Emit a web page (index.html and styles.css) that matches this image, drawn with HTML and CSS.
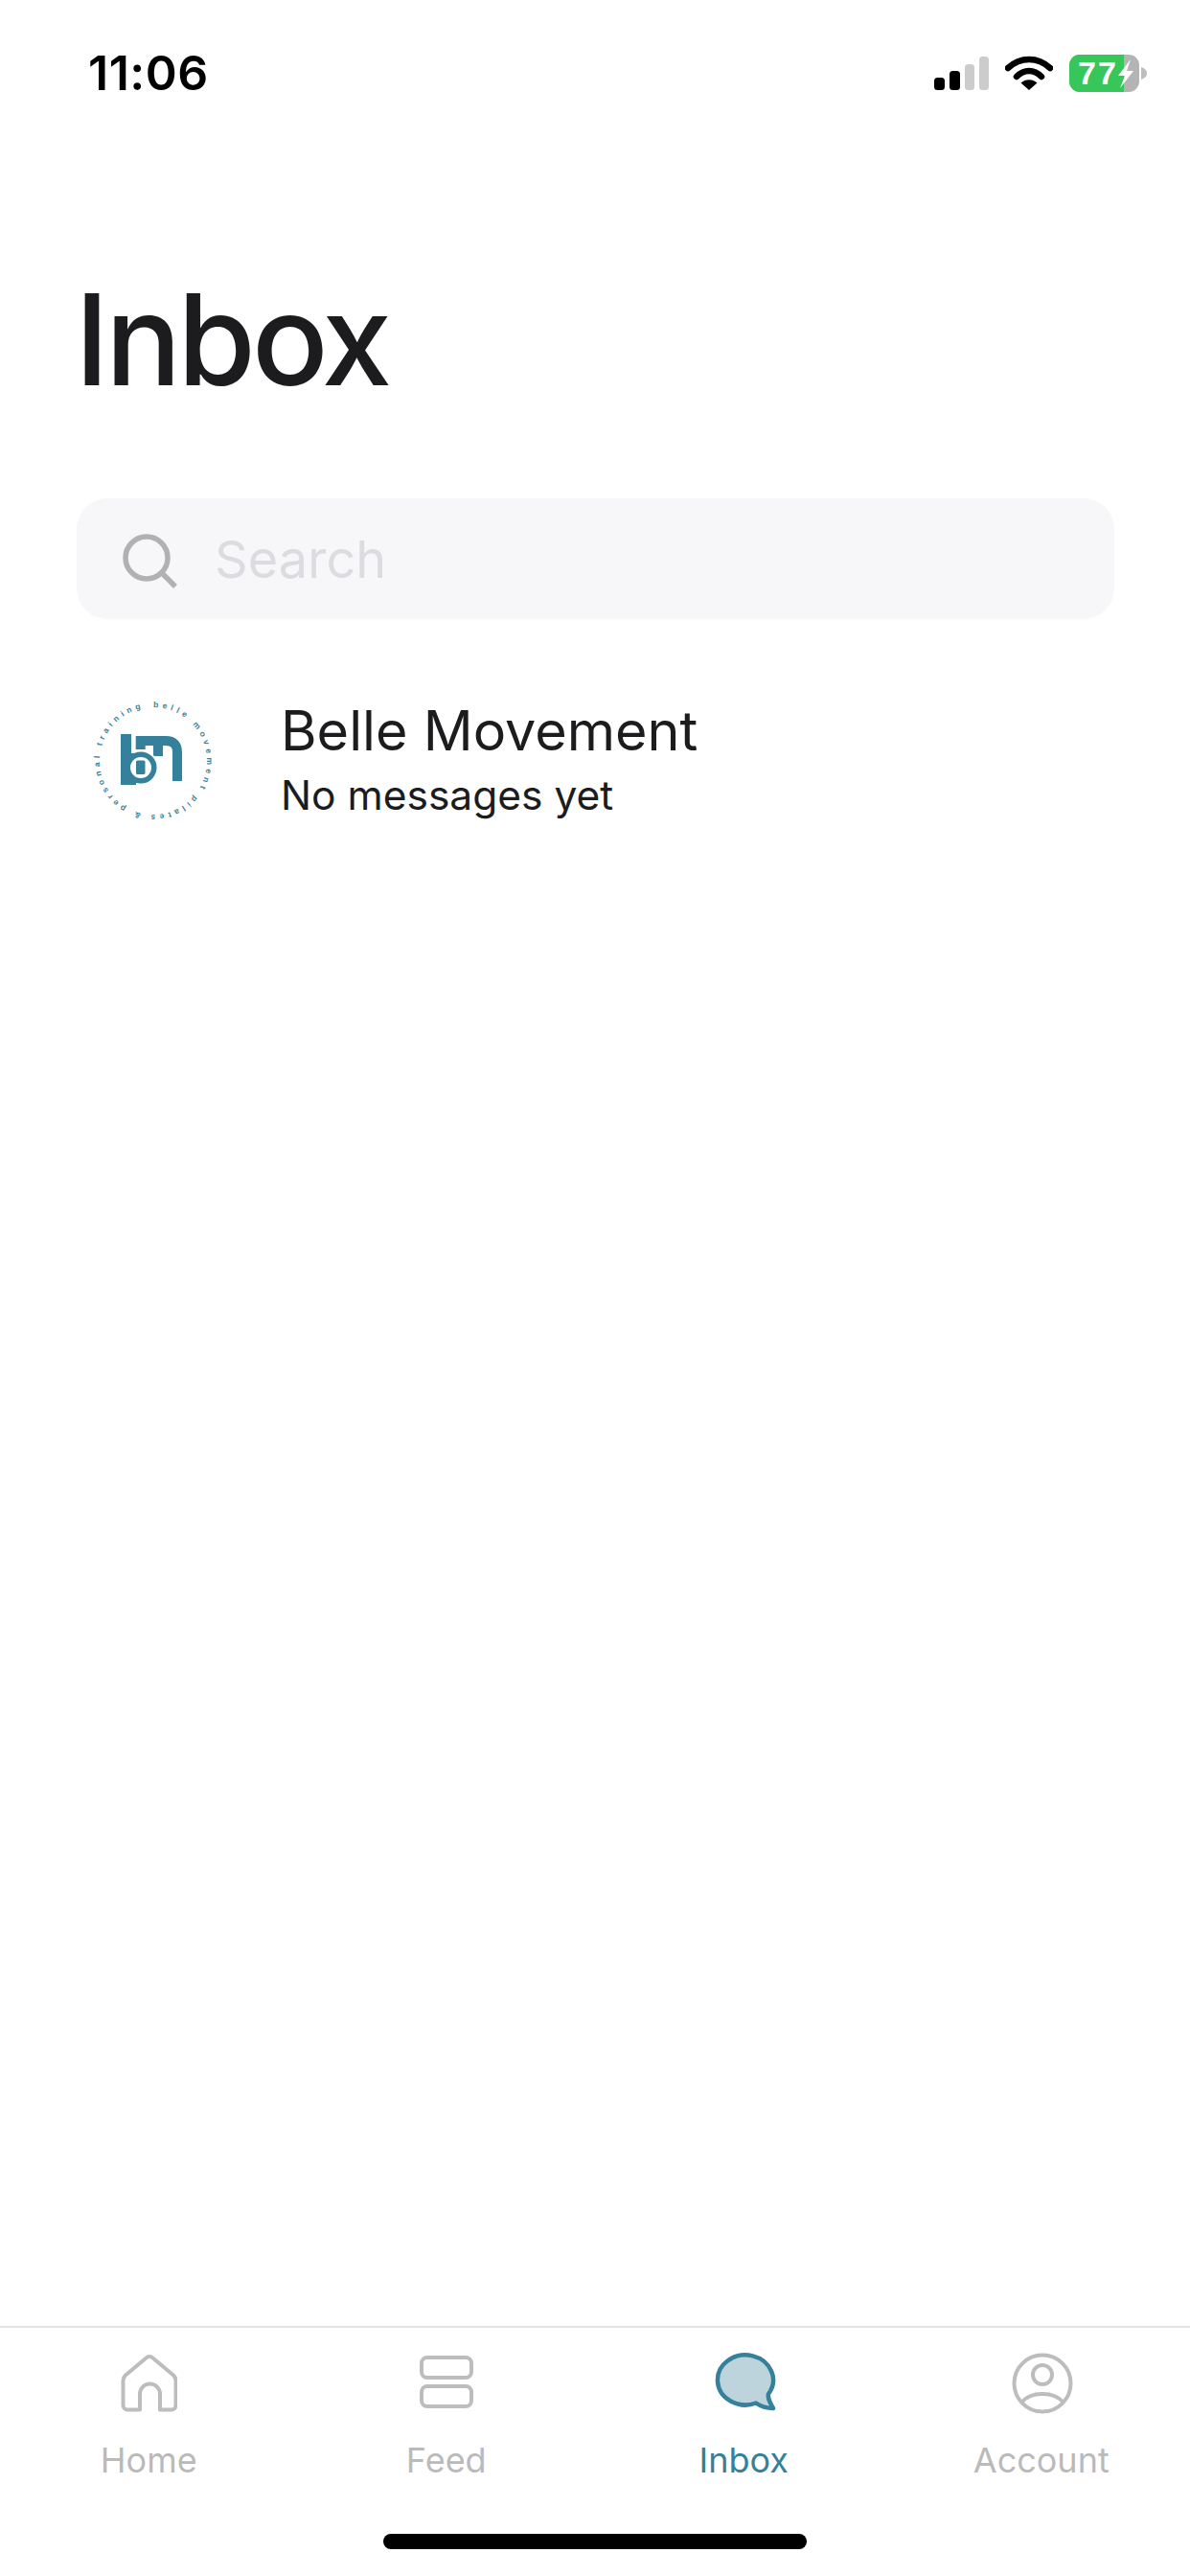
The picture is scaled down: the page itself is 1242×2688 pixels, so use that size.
FILE: index.html
```html
<!doctype html>
<html>
<head>
    <title>Inbox</title>
    <meta charset="utf-8" />
    <meta name="viewport" content="width=device-width, initial-scale=1" />
    <link rel="stylesheet" href="styles.css">
</head>

<body>
	<div class="page">
		<div class="statusBar">
			<span class="clock">11:06</span>
			<div class="statusIcons">
				<svg class="signal" width="57" height="35" viewBox="0 0 57 35">
					<rect x="0" y="22" width="11" height="13" rx="3.5" fill="#000"/>
					<rect x="16" y="15" width="11" height="20" rx="3.5" fill="#000"/>
					<rect x="32" y="8" width="10" height="27" rx="3.5" fill="#ccc"/>
					<rect x="47" y="0" width="10" height="35" rx="3.5" fill="#ccc"/>
				</svg>
				<svg class="wifi" width="50" height="36" viewBox="0 0 50 36">
					<path d="M3 13 C16 1 34 1 47 13" fill="none" stroke="#000" stroke-width="6.5" stroke-linecap="round"/>
					<path d="M12 22 C20 14 30 14 38 22" fill="none" stroke="#000" stroke-width="6.5" stroke-linecap="round"/>
					<path d="M16.5 28.5 C21 24 29 24 33.5 28.5 L25 36 Z" fill="#000"/>
				</svg>
				<svg class="battery" width="81" height="39" viewBox="0 0 81 39">
					<rect x="0" y="0" width="73" height="39" rx="11" fill="#b4b4b4"/>
					<path d="M11 0 H57 V39 H11 A11 11 0 0 1 0 28 V11 A11 11 0 0 1 11 0 Z" fill="#36c659"/>
					<path d="M75 13 Q81 15 81 19.5 Q81 24 75 26 Z" fill="#bdbdbd"/>
					<text class="batteryText" x="9" y="31">77</text>
					<path d="M64 5 L51 22 H58 L53 35 L67 17 H60 Z" fill="#fff"/>
				</svg>
			</div>
		</div>

		<h1 class="pageTitle">Inbox</h1>

		<div class="searchBox">
			<svg class="searchIcon" width="60" height="60" viewBox="0 0 60 60">
				<circle cx="26" cy="26" r="22" fill="none" stroke="#b1b1b3" stroke-width="5.5"/>
				<path d="M42 42 L56 56" stroke="#b1b1b3" stroke-width="5.5" fill="none"/>
			</svg>
			<span class="searchText">Search</span>
		</div>

		<div class="list">
			<div class="listRow">
				<svg class="avatar" width="140" height="140" viewBox="0 0 140 140">
					<defs>
						<path id="ringPath" d="M72 14 A56 56 0 1 1 71.9 14"/>
					</defs>
					<text class="ringText"><textPath href="#ringPath" textLength="338">belle movement pilates &amp; personal training</textPath></text>
					<!-- m -->
					<path d="M58.7 58 V49 H85 Q97 49 97 61 V91" fill="none" stroke="#35809a" stroke-width="10"/>
					<path d="M77 49 V65" fill="none" stroke="#35809a" stroke-width="10"/>
					<!-- b -->
					<circle cx="59" cy="77" r="17.5" fill="#35809a" stroke="#fff" stroke-width="2"/>
					<rect x="38" y="42" width="11" height="53" fill="#35809a"/>
					<rect x="44" y="62" width="10" height="33" fill="#35809a"/>
					<circle cx="59" cy="77" r="11" fill="#fff"/>
					<rect x="54" y="69.5" width="9.5" height="14.5" rx="1.5" fill="#35809a"/>
				</svg>
				<div class="rowText">
					<div class="rowName">Belle Movement</div>
					<div class="rowSub">No messages yet</div>
				</div>
			</div>
		</div>

		<div class="tabBar">
			<div class="tab">
				<svg class="tabIcon" width="60" height="68" viewBox="-1 0 60 68">
					<path d="M26.5 7.5 a5 5 0 0 1 7 0 L55 25.5 Q57.5 28 57.5 31 V57 a4.5 4.5 0 0 1 -4.5 4.5 H41 V45 a10.5 10.5 0 0 0 -21 0 V61.5 H7 a4.5 4.5 0 0 1 -4.5 -4.5 V31 Q2.5 28 5 25.5 Z" fill="none" stroke="#bdbdbd" stroke-width="4" stroke-linejoin="round"/>
				</svg>
				<span class="tabLabel">Home</span>
			</div>
			<div class="tab">
				<svg class="tabIcon" width="60" height="68" viewBox="0 0 60 68">
					<rect x="4" y="7" width="52" height="21" rx="6" fill="none" stroke="#bdbdbd" stroke-width="4"/>
					<rect x="4" y="37" width="52" height="21" rx="6" fill="none" stroke="#bdbdbd" stroke-width="4"/>
				</svg>
				<span class="tabLabel">Feed</span>
			</div>
			<div class="tab tabActive">
				<svg class="tabIcon" width="68" height="68" viewBox="-2 0 68 68">
					<path d="M45 54.5 A29 26 0 1 1 58 45 C57 50 60 55 63 60 C56 60 50 58 45 54.5 Z" fill="#bed4dd" stroke="#35809a" stroke-width="4.5" stroke-linejoin="round"/>
				</svg>
				<span class="tabLabel">Inbox</span>
			</div>
			<div class="tab">
				<svg class="tabIcon" width="68" height="68" viewBox="-1 0 68 68">
					<circle cx="34" cy="34" r="29.5" fill="none" stroke="#bdbdbd" stroke-width="4"/>
					<circle cx="34" cy="25" r="10" fill="none" stroke="#bdbdbd" stroke-width="4"/>
					<path d="M12 54 C22 42 46 42 56 54" fill="none" stroke="#bdbdbd" stroke-width="4"/>
				</svg>
				<span class="tabLabel">Account</span>
			</div>
		</div>

		<div class="homeArea"><div class="homeBar"></div></div>
	</div>
</body>
</html>
```

FILE: styles.css
```css
* {
	box-sizing: border-box;
}
body {
	margin: 0;
	padding: 0;
	background-color: #fff;
	font-family: Inter, "Liberation Sans", sans-serif;
	color: #1c1c1e;
}
.page {
	width: 1242px;
	height: 2688px;
	display: flex;
	flex-direction: column;
	overflow: hidden;
}
.statusBar {
	display: flex;
	justify-content: space-between;
	align-items: center;
	height: 76px;
	margin-top: 38px;
	padding: 0 45px 0 92px;
}
.clock {
	font-size: 50px;
	font-weight: 600;
	letter-spacing: 0.5px;
	color: #000;
}
.statusIcons {
	display: flex;
	align-items: center;
	gap: 17px;
}
.batteryText {
	font-family: "Liberation Sans", sans-serif;
	font-size: 34px;
	font-weight: bold;
	letter-spacing: 2px;
	fill: #fff;
}
.pageTitle {
	margin: 175px 0 0 78px;
	font-size: 132px;
	font-weight: 450;
	line-height: 130px;
	letter-spacing: -4px;
}
.searchBox {
	display: flex;
	align-items: center;
	gap: 37px;
	height: 126px;
	margin: 101px 79px 0 80px;
	padding-left: 47px;
	background-color: #f7f7f9;
	border-radius: 32px;
}
.searchIcon {
	margin-top: 6px;
}
.searchText {
	font-size: 54px;
	color: #dcdce0;
}
.list {
	flex: 1;
	padding-top: 78px;
}
.listRow {
	display: flex;
	align-items: center;
	padding-left: 88px;
}
.avatar {
	flex: none;
	overflow: visible;
}
.rowText {
	margin-left: 65px;
}
.rowName {
	font-size: 57.5px;
	line-height: 72px;
}
.rowSub {
	font-size: 42.5px;
	line-height: 64px;
}
.ringText {
	font-family: "Liberation Sans", sans-serif;
	font-size: 8.5px;
	font-weight: bold;
	fill: #3f8098;
}
.tabBar {
	display: flex;
	height: 216px;
	border-top: 2px solid #e4e4e4;
	padding-top: 24px;
}
.tab {
	flex: 1;
	display: flex;
	flex-direction: column;
	align-items: center;
	gap: 24px;
}
.tabIcon {
	display: block;
}
.tabLabel {
	font-size: 36px;
	line-height: 44px;
	color: #bababa;
}
.tabActive .tabLabel {
	color: #35809a;
}
.homeArea {
	height: 45px;
	flex: none;
	padding-top: 1px;
}
.homeBar {
	width: 442px;
	height: 16px;
	margin: 0 auto;
	background-color: #000;
	border-radius: 8px;
}
```
